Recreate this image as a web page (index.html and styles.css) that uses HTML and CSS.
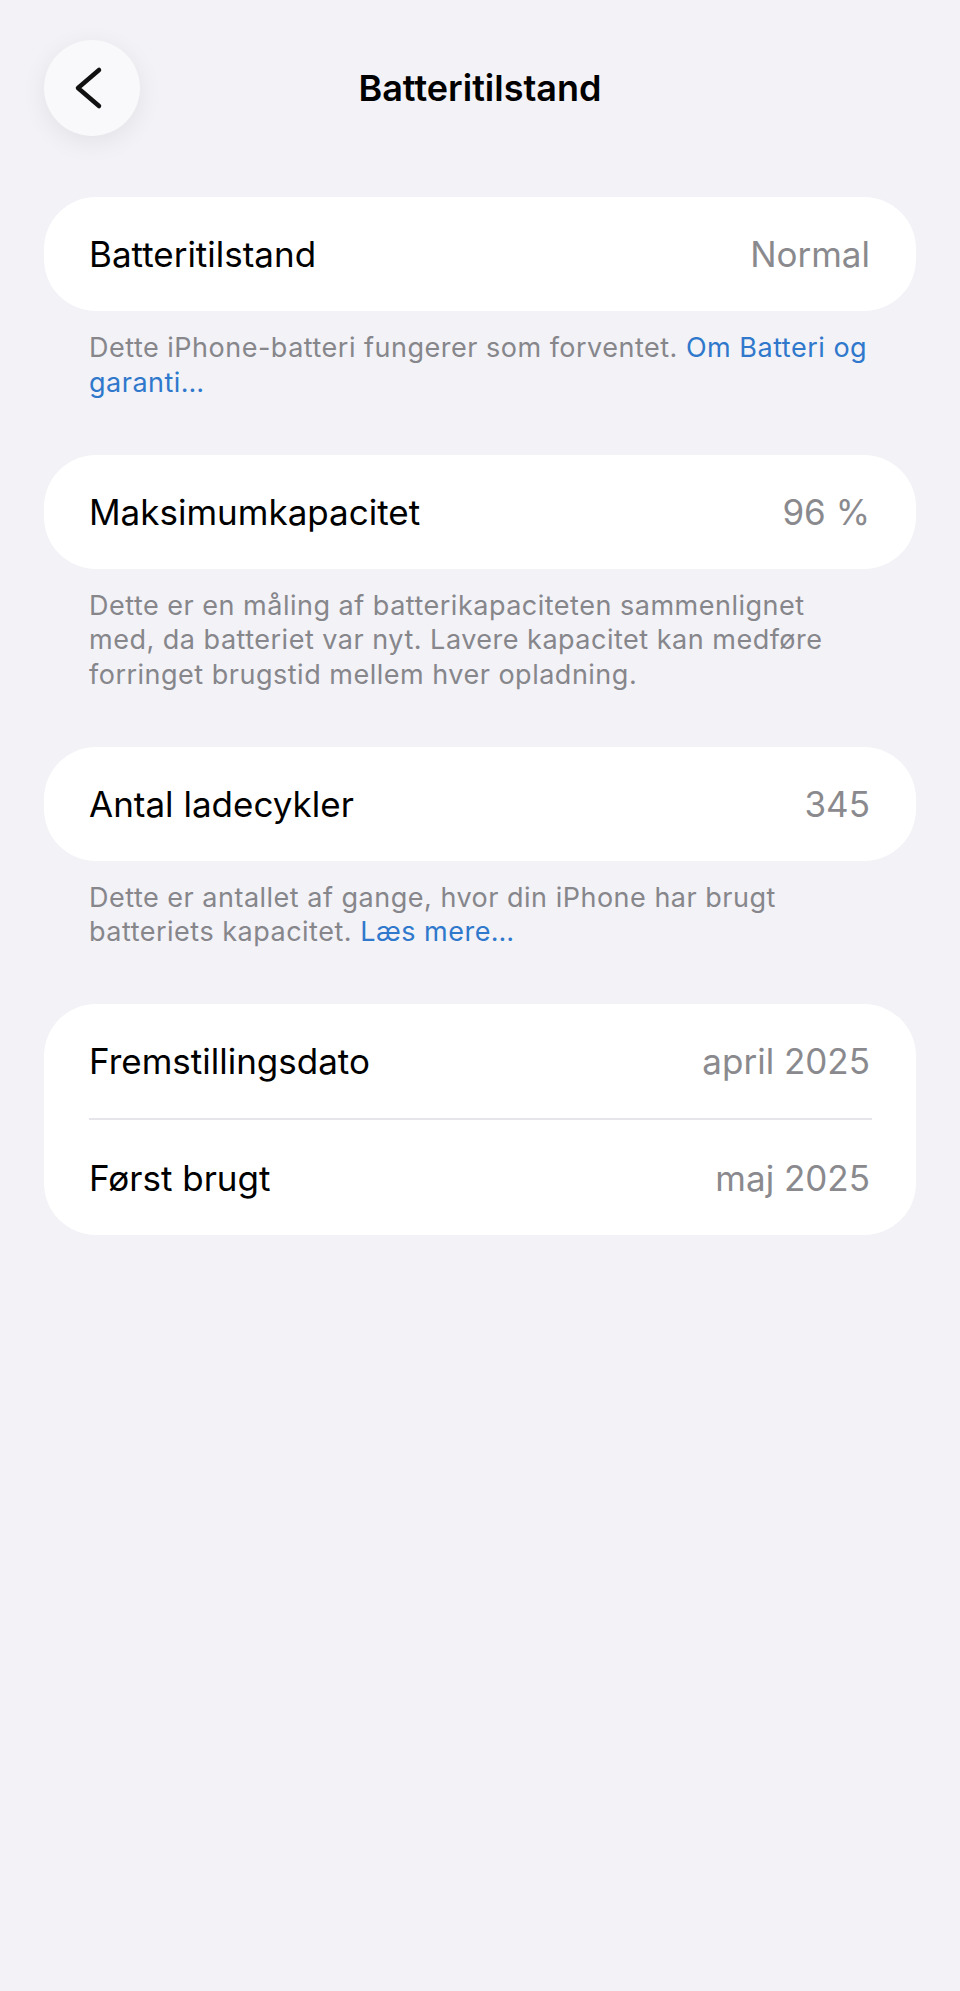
FILE: index.html
```html
<!DOCTYPE html>
<html lang="da">
<head>
  <meta charset="UTF-8">
  <meta name="viewport" content="width=device-width, initial-scale=1.0">
  <title>Batteritilstand</title>
  <link rel="stylesheet" href="styles.css">
</head>
<body>
  <div class="screen">
    <header class="nav">
      <button class="back" aria-label="Tilbage">
        <svg width="96" height="96" viewBox="0 0 96 96">
          <path d="M55 30 L34 48 L55 66" fill="none" stroke="#111" stroke-width="4.5" stroke-linecap="round" stroke-linejoin="round"/>
        </svg>
      </button>
      <h1 class="title">Batteritilstand</h1>
    </header>

    <section class="group">
      <div class="card">
        <div class="row">
          <span class="label">Batteritilstand</span>
          <span class="value">Normal</span>
        </div>
      </div>
      <p class="note">Dette iPhone-batteri fungerer som forventet. <a href="#">Om Batteri og<br>garanti…</a></p>
    </section>

    <section class="group">
      <div class="card">
        <div class="row">
          <span class="label">Maksimumkapacitet</span>
          <span class="value">96 %</span>
        </div>
      </div>
      <p class="note">Dette er en måling af batterikapaciteten sammenlignet<br>med, da batteriet var nyt. Lavere kapacitet kan medføre<br>forringet brugstid mellem hver opladning.</p>
    </section>

    <section class="group">
      <div class="card">
        <div class="row">
          <span class="label">Antal ladecykler</span>
          <span class="value">345</span>
        </div>
      </div>
      <p class="note">Dette er antallet af gange, hvor din iPhone har brugt<br>batteriets kapacitet. <a href="#">Læs mere…</a></p>
    </section>

    <section class="group">
      <div class="card">
        <div class="row">
          <span class="label">Fremstillingsdato</span>
          <span class="value">april 2025</span>
        </div>
        <div class="divider"></div>
        <div class="row row-last">
          <span class="label">Først brugt</span>
          <span class="value">maj 2025</span>
        </div>
      </div>
    </section>
  </div>
</body>
</html>
```

FILE: styles.css
```css
* {
  box-sizing: border-box;
  margin: 0;
  padding: 0;
}

body {
  font-family: Inter, "Noto Sans", "Liberation Sans", sans-serif;
  background-color: #f2f2f7;
  color: #000;
  min-height: 100vh;
}

.screen {
  padding: 40px 44px 0 44px;
}

/* top bar */
.nav {
  display: grid;
  grid-template-columns: 96px 1fr 96px;
  align-items: center;
  height: 96px;
  margin-bottom: 61px;
}

.back {
  width: 96px;
  height: 96px;
  border: none;
  border-radius: 50%;
  background-color: #f9f9fb;
  box-shadow: 0 6px 26px rgba(0,0,0,0.07);
  display: flex;
  align-items: center;
  justify-content: center;
  cursor: pointer;
}

.back svg {
  display: block;
}

.title {
  text-align: center;
  font-size: 36px;
  font-weight: 600;
  color: #000;
}

/* grouped rows */
.group {
  margin-bottom: 54.5px;
}

.card {
  background-color: #fff;
  border-radius: 52px;
  overflow: hidden;
}

.row {
  display: flex;
  justify-content: space-between;
  align-items: center;
  height: 114px;
  padding: 0 46px 0 45px;
  font-size: 35px;
}

.row-last {
  height: 115px;
}

.label {
  color: #000;
}

.value {
  color: #8a8a8e;
}

.divider {
  height: 2px;
  background-color: #e5e5ea;
  margin: 0 44px 0 45px;
}

.note {
  padding: 20px 40px 0 45px;
  font-size: 27px;
  line-height: 34.5px;
  color: #86868b;
  letter-spacing: 0.5px;
}

.note a {
  color: #2f78cc;
  text-decoration: none;
}
```
